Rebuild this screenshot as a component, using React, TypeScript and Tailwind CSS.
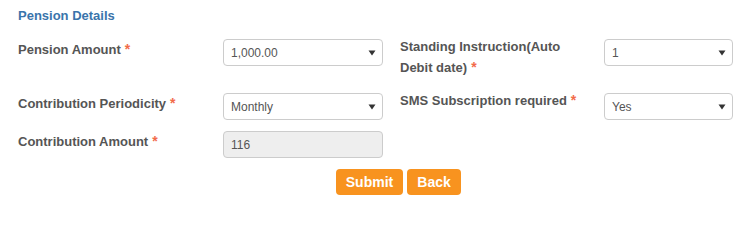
import React from "react";

const Star = () => <span className="ml-[4px] text-[14px] text-[#f26b4a]">*</span>;

const Label = ({ text, className = "" }: { text: string; className?: string }) => (
  <div className={`text-[13px] font-bold leading-[21px] text-[#555] ${className}`}>
    {text}
    <Star />
  </div>
);

const Select = ({ value, width }: { value: string; width: string }) => (
  <div
    className={`flex h-[27px] ${width} items-center justify-between rounded-[4px] border border-[#ccc] bg-white pl-[7px] pr-[6px] text-[12px] text-[#555]`}
  >
    <span>{value}</span>
    <svg width="8" height="6" viewBox="0 0 8 6" className="mt-px">
      <path d="M0.5 0.5 H7.5 L4 5.5 Z" fill="#333" />
    </svg>
  </div>
);

export default function App() {
  return (
    <div className="h-[200px] w-[739px] bg-white font-['Liberation_Sans',Arial,sans-serif]">
      <div className="px-[18px] pt-[8px] text-[13px] font-bold leading-[15px] text-[#3a74ab]">Pension Details</div>

      <div className="mt-[16px] flex flex-col pl-[18px]">
        {/* row 1 */}
        <div className="flex h-[54px] items-start">
          <Label text="Pension Amount" className="w-[205px]" />
          <Select value="1,000.00" width="w-[160px]" />
          <Label text="Standing Instruction(Auto Debit date)" className="ml-[17px] -mt-[3px] w-[204px] pr-[16px]" />
          <Select value="1" width="w-[129px]" />
        </div>

        {/* row 2 */}
        <div className="flex h-[38px] items-start">
          <Label text="Contribution Periodicity" className="w-[205px]" />
          <Select value="Monthly" width="w-[160px]" />
          <Label text="SMS Subscription required" className="ml-[17px] -mt-[3px] w-[204px]" />
          <Select value="Yes" width="w-[129px]" />
        </div>

        {/* row 3 */}
        <div className="flex items-start">
          <Label text="Contribution Amount" className="w-[205px]" />
          <input
            readOnly
            disabled
            value="116"
            className="h-[27px] w-[160px] rounded-[4px] border border-[#ccc] bg-[#eee] px-[7px] text-[12px] text-[#555]"
          />
        </div>
      </div>

      <div className="mt-[11px] flex gap-[4px] pl-[336px]">
        <button className="h-[26px] w-[67px] rounded-[4px] bg-[#f8931f] text-[14px] font-bold text-white">Submit</button>
        <button className="h-[26px] w-[54px] rounded-[4px] bg-[#f8931f] text-[14px] font-bold text-white">Back</button>
      </div>
    </div>
  );
}
